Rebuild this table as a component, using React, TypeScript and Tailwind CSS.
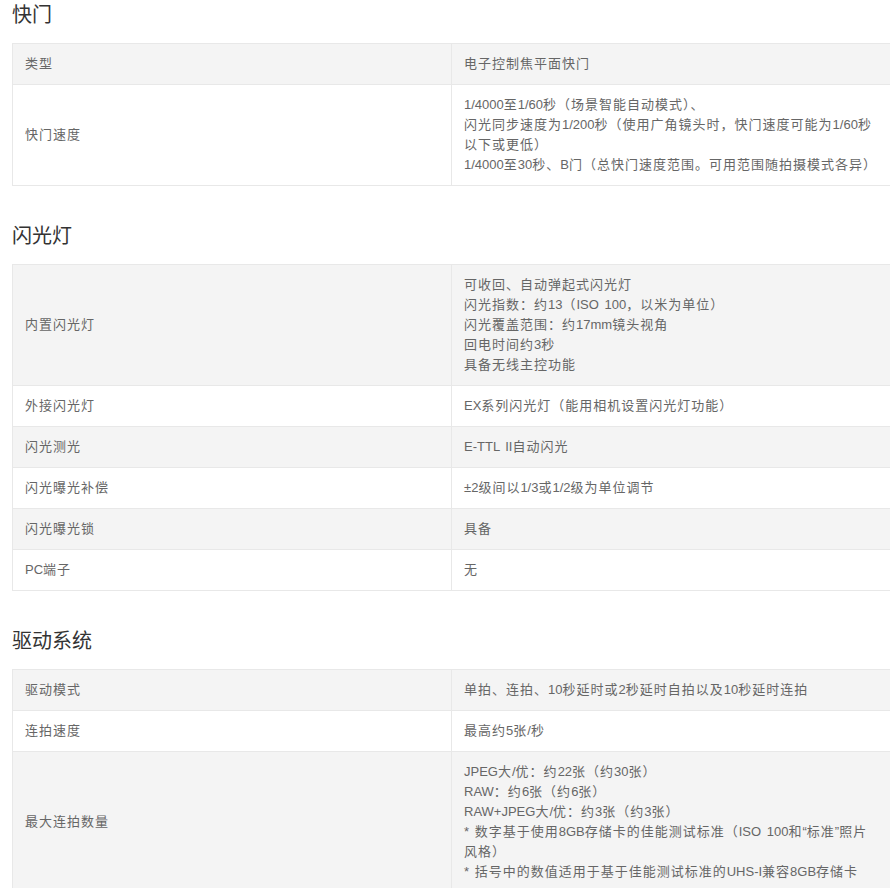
import React from "react";

type Row = { label: string; value: string[] };
type Section = { title: string; rows: Row[] };

const sections: Section[] = [
  {
    title: "快门",
    rows: [
      { label: "类型", value: ["电子控制焦平面快门"] },
      {
        label: "快门速度",
        value: [
          "1/4000至1/60秒（场景智能自动模式）、",
          "闪光同步速度为1/200秒（使用广角镜头时，快门速度可能为1/60秒以下或更低）",
          "1/4000至30秒、B门（总快门速度范围。可用范围随拍摄模式各异）",
        ],
      },
    ],
  },
  {
    title: "闪光灯",
    rows: [
      {
        label: "内置闪光灯",
        value: [
          "可收回、自动弹起式闪光灯",
          "闪光指数：约13（ISO 100，以米为单位）",
          "闪光覆盖范围：约17mm镜头视角",
          "回电时间约3秒",
          "具备无线主控功能",
        ],
      },
      { label: "外接闪光灯", value: ["EX系列闪光灯（能用相机设置闪光灯功能）"] },
      { label: "闪光测光", value: ["E-TTL II自动闪光"] },
      { label: "闪光曝光补偿", value: ["±2级间以1/3或1/2级为单位调节"] },
      { label: "闪光曝光锁", value: ["具备"] },
      { label: "PC端子", value: ["无"] },
    ],
  },
  {
    title: "驱动系统",
    rows: [
      { label: "驱动模式", value: ["单拍、连拍、10秒延时或2秒延时自拍以及10秒延时连拍"] },
      { label: "连拍速度", value: ["最高约5张/秒"] },
      {
        label: "最大连拍数量",
        value: [
          "JPEG大/优：约22张（约30张）",
          "RAW：约6张（约6张）",
          "RAW+JPEG大/优：约3张（约3张）",
          "* 数字基于使用8GB存储卡的佳能测试标准（ISO 100和“标准”照片风格）",
          "* 括号中的数值适用于基于佳能测试标准的UHS-I兼容8GB存储卡",
        ],
      },
    ],
  },
];

// CJK glyphs in the original take ~14px each next to 13px latin text
const cjk = /([\u3000-\u303f\u4e00-\u9fff\uff00-\uffef]+)/;

function Mixed({ text }: { text: string }) {
  return (
    <>
      {text.split(cjk).map((part, i) =>
        cjk.test(part) ? (
          <span key={i} className="tracking-[1px]">
            {part}
          </span>
        ) : (
          part
        )
      )}
    </>
  );
}

function SpecTable({ rows }: { rows: Row[] }) {
  return (
    <table className="w-[879px] border-collapse table-fixed text-[13px] leading-5 text-[#666] [word-spacing:2px]">
      <colgroup>
        <col className="w-[439px]" />
        <col />
      </colgroup>
      <tbody>
        {rows.map((r, i) => (
          <tr key={i} className={i % 2 === 0 ? "bg-[#f4f4f4]" : "bg-white"}>
            <td className="border border-[#e8e8e8] px-3 py-[10px] align-middle">
              <Mixed text={r.label} />
            </td>
            <td className="border border-[#e8e8e8] px-3 py-[10px] align-middle">
              {r.value.map((line, j) => (
                <div key={j}>
                  <Mixed text={line} />
                </div>
              ))}
            </td>
          </tr>
        ))}
      </tbody>
    </table>
  );
}

export default function App() {
  return (
    <div
      className="w-[890px] h-[888px] overflow-hidden bg-white pl-3"
      style={{ fontFamily: '"Liberation Sans", Arial, "Noto Sans CJK SC", sans-serif' }}
    >
      {sections.map((s, i) => (
        <section key={i} className={i > 0 ? "mt-[35px]" : ""}>
          <h2 className="text-[20px] leading-[30px] text-[#333] mb-[13px]">{s.title}</h2>
          <SpecTable rows={s.rows} />
        </section>
      ))}
    </div>
  );
}
